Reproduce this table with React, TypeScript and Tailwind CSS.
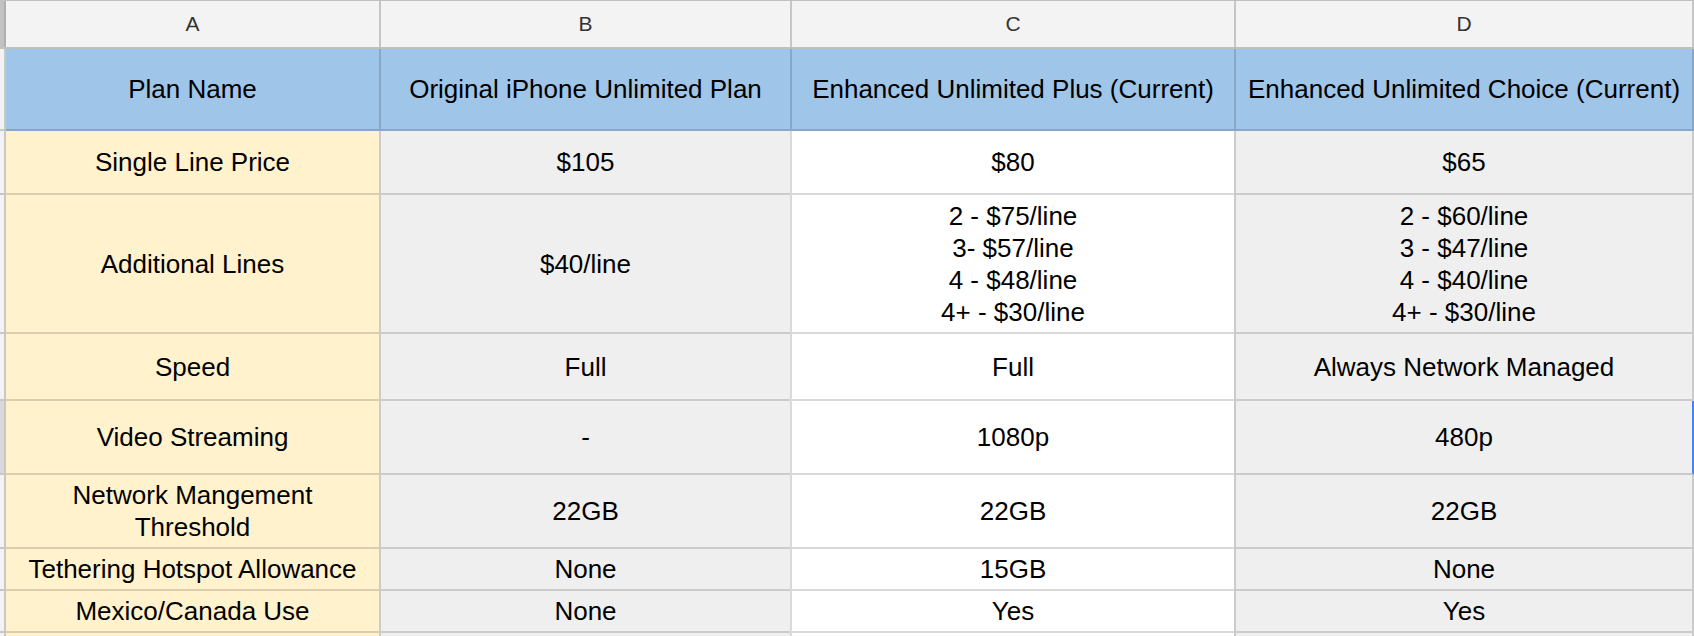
const COLS = [
  { letter: 'A', w: 'w-[373px]', bg: 'bg-[#fff2cc]' },
  { letter: 'B', w: 'w-[411px] border-l-2', bg: 'bg-[#efefef]' },
  { letter: 'C', w: 'w-[444px] border-l-2', bg: 'bg-white' },
  { letter: 'D', w: 'w-[460px] border-l-2 border-r-2', bg: 'bg-[#efefef]' },
];

const ROWS: { h: string; cells: string[][]; selected?: boolean }[] = [
  { h: 'h-[64px]', cells: [['Single Line Price'], ['$105'], ['$80'], ['$65']] },
  {
    h: 'h-[139px]',
    cells: [
      ['Additional Lines'],
      ['$40/line'],
      ['2 - $75/line', '3- $57/line', '4 - $48/line', '4+ - $30/line'],
      ['2 - $60/line', '3 - $47/line', '4 - $40/line', '4+ - $30/line'],
    ],
  },
  { h: 'h-[67px]', cells: [['Speed'], ['Full'], ['Full'], ['Always Network Managed']] },
  { h: 'h-[74px]', cells: [['Video Streaming'], ['-'], ['1080p'], ['480p']], selected: true },
  { h: 'h-[74px]', cells: [['Network Mangement Threshold'], ['22GB'], ['22GB'], ['22GB']] },
  { h: 'h-[42px]', cells: [['Tethering Hotspot Allowance'], ['None'], ['15GB'], ['None']] },
  { h: 'h-[42px]', cells: [['Mexico/Canada Use'], ['None'], ['Yes'], ['Yes']] },
  { h: 'h-[30px]', cells: [[], [], [], []] },
];

const HEADERS = [
  'Plan Name',
  'Original iPhone Unlimited Plan',
  'Enhanced Unlimited Plus (Current)',
  'Enhanced Unlimited Choice (Current)',
];

export default function App() {
  return (
    <div
      className="w-[1694px] h-[636px] overflow-hidden bg-white text-black text-[26px] leading-[32px]"
      style={{ fontFamily: '"Liberation Sans", Arial, sans-serif' }}
    >
      {/* Column letters */}
      <div className="flex h-[49px] bg-[#f3f3f3] border-t border-b-2 border-[#c0c0c0]">
        <div className="w-[6px] shrink-0 bg-[#c2c2c2] border-r-2 border-[#b0b0b0]" />
        {COLS.map((c) => (
          <div
            key={c.letter}
            className={`${c.w} shrink-0 border-[#c6c6c6] flex items-center justify-center text-[21px] text-[#333]`}
          >
            {c.letter}
          </div>
        ))}
      </div>

      {/* Header row */}
      <div className="flex h-[82px]">
        <div className="w-[6px] shrink-0 bg-[#f3f3f3] border-r-2 border-b-2 border-[#c8c8c8]" />
        {COLS.map((c, i) => (
          <div
            key={c.letter}
            className={`${c.w} shrink-0 bg-[#9fc5e8] border-b-2 border-black/15 flex items-center justify-center px-[6px] text-center`}
          >
            {HEADERS[i]}
          </div>
        ))}
      </div>

      {/* Data rows */}
      {ROWS.map((row, r) => (
        <div key={r} className={`flex ${row.h}`}>
          <div
            className={`w-[6px] shrink-0 border-r-2 border-b-2 border-[#c8c8c8] ${
              row.selected ? 'bg-[#d9d9d9]' : 'bg-[#f3f3f3]'
            }`}
          />
          {COLS.map((c, i) => (
            <div
              key={c.letter}
              className={`${c.w} ${c.bg} shrink-0 border-b-2 border-black/15 flex flex-col items-center justify-center px-[6px] text-center ${
                row.selected && i === 3 ? 'border-r-[#4285f4]' : ''
              }`}
            >
              {row.cells[i].map((line) => (
                <div key={line}>{line}</div>
              ))}
            </div>
          ))}
        </div>
      ))}
    </div>
  );
}
